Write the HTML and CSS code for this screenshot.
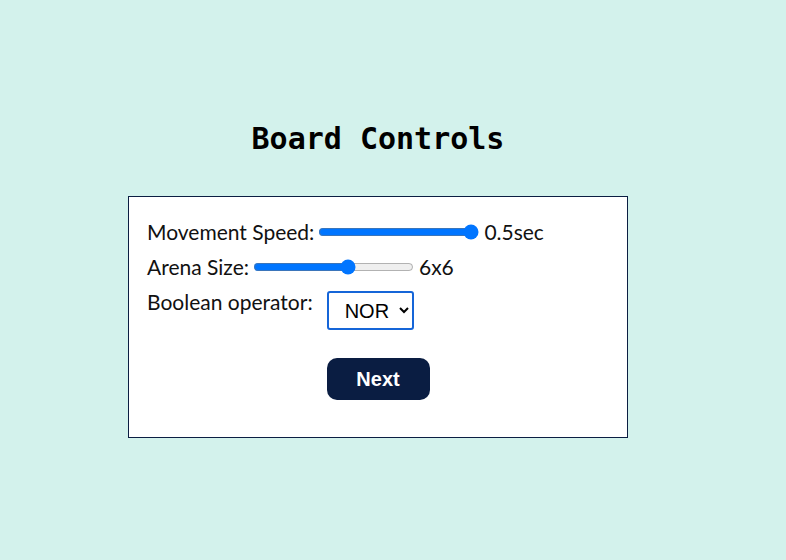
FILE: index.html
```html
<!DOCTYPE html>
<html>
<head>
<meta charset="utf-8">
<link rel="stylesheet" href="styles.css">
</head>
<body>
<div class="page">
  <h1 class="title">Board Controls</h1>
  <div class="panel">
    <div class="row">
      <label class="label">Movement Speed:</label>
      <input class="slider" type="range" min="0.1" max="0.5" step="0.1" value="0.5">
      <span class="value">0.5sec</span>
    </div>
    <div class="row">
      <label class="label">Arena Size:</label>
      <input class="slider" type="range" min="3" max="8" step="1" value="6">
      <span class="value">6x6</span>
    </div>
    <div class="row row-top">
      <label class="label">Boolean operator:</label>
      <select class="select">
        <option>AND</option>
        <option>OR</option>
        <option selected>NOR</option>
        <option>XOR</option>
      </select>
    </div>
    <div class="actions">
      <button class="btn">Next</button>
    </div>
  </div>
</div>
</body>
</html>
```
FILE: styles.css
```css
html, body {
  margin: 0;
  padding: 0;
  background: #d3f2ec;
  width: 786px;
  height: 560px;
}
.page {
  padding-top: 120px;
  padding-left: 128px;
  width: 500px;
}
.title {
  margin: 0 0 38px 0;
  font-family: "DejaVu Sans Mono", "Liberation Mono", monospace;
  font-weight: bold;
  font-size: 30px;
  line-height: 38px;
  text-align: center;
  color: #000;
}
.panel {
  box-sizing: border-box;
  width: 500px;
  background: #fff;
  border: 1px solid #0b1e42;
  padding: 20px 18px 37px 18px;
  font-family: "Lato", "Noto Sans", sans-serif;
  font-size: 21px;
  color: #111;
}
.row {
  display: flex;
  align-items: center;
  height: 30px;
  margin-bottom: 5px;
}
.row-top {
  align-items: flex-start;
  height: 39px;
  margin-top: 0;
}
.label {
  line-height: 30px;
}
.slider {
  width: 161px;
  margin: 0 5px 0 4px;
  accent-color: #0075ff;
}
.value {
  line-height: 30px;
}
.select {
  margin: 4px 0 0 14px;
  height: 39px;
  width: 87px;
  font-family: "Liberation Sans", Arial, sans-serif;
  font-size: 20px;
  border: 2px solid #1565d8;
  border-radius: 3px;
  background: #fff;
  color: #000;
  padding: 0 6px 0 12px;
}
.actions {
  display: flex;
  justify-content: center;
  margin-top: 32px;
}
.btn {
  width: 103px;
  height: 42px;
  background: #0a1d42;
  color: #fff;
  border: none;
  border-radius: 10px;
  font-family: "Liberation Sans", Arial, sans-serif;
  font-weight: bold;
  font-size: 20px;
}
```
